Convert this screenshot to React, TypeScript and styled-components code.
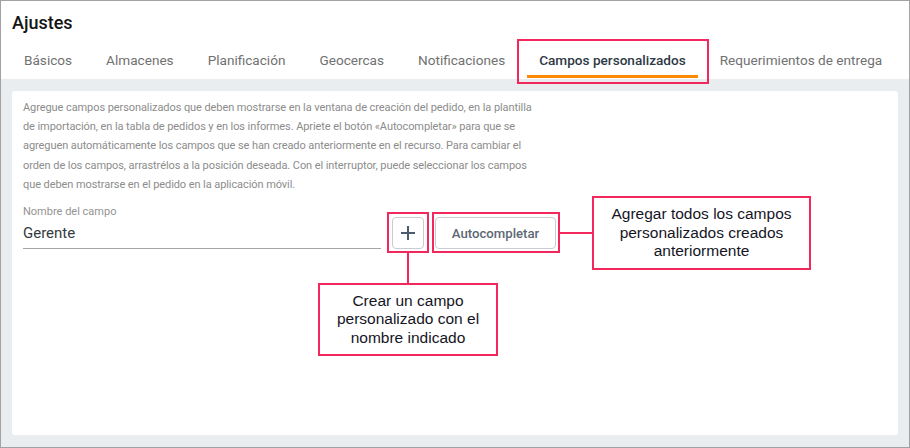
import React from 'react';
import styled, { createGlobalStyle } from 'styled-components';

const GlobalStyle = createGlobalStyle`
  html, body {
    margin: 0;
    padding: 0;
    background: #ffffff;
  }
  * {
    box-sizing: border-box;
  }
`;

const Root = styled.div`
  position: relative;
  width: 910px;
  height: 448px;
  border: 1px solid #a2a2a2;
  font-family: Roboto, 'Liberation Sans', sans-serif;
  display: flex;
  flex-direction: column;
  overflow: hidden;
`;

const Header = styled.div`
  background: #ffffff;
  padding: 10px 0 0 11px;
`;

const Title = styled.h1`
  margin: 0;
  font-size: 18px;
  line-height: 24px;
  font-weight: 500;
  color: #141414;
`;

const TabBar = styled.div`
  display: flex;
  gap: 10px;
  margin-top: 7px;
`;

const Tab = styled.div<{ $active?: boolean }>`
  height: 36px;
  padding: 3px 12px 0;
  display: flex;
  align-items: center;
  font-size: 13.6px;
  white-space: nowrap;
  color: ${(p) => (p.$active ? '#2e3945' : '#717171')};
  font-weight: ${(p) => (p.$active ? 500 : 400)};
  border-bottom: 3px solid ${(p) => (p.$active ? '#ff8a00' : 'transparent')};
  margin-bottom: 1px;
`;

const Body = styled.div`
  flex: 1;
  background: #e9edf0;
  padding: 12px 11px 12px 11px;
  display: flex;
`;

const Card = styled.div`
  flex: 1;
  background: #ffffff;
  border-radius: 3px;
  padding: 7px 11px;
`;

const Description = styled.p`
  margin: 0;
  width: 520px;
  font-size: 11px;
  letter-spacing: -0.08px;
  line-height: 19.2px;
  color: #8c8c8c;
`;

const FormRow = styled.div`
  display: flex;
  align-items: flex-end;
  gap: 11px;
  margin-top: 11px;
`;

const Field = styled.div`
  width: 358px;
  display: flex;
  flex-direction: column;
`;

const Label = styled.div`
  font-size: 11px;
  line-height: 13px;
  color: #939393;
`;

const Input = styled.div`
  height: 31px;
  display: flex;
  align-items: center;
  font-size: 15px;
  color: #333a40;
  border-bottom: 1px solid #a5a5a5;
`;

const Button = styled.button<{ $square?: boolean }>`
  height: 32px;
  width: ${(p) => (p.$square ? '32px' : '121px')};
  padding: 0;
  display: flex;
  align-items: center;
  justify-content: center;
  background: #ffffff;
  border: 1px solid #c9cdd1;
  border-radius: 4px;
  font-family: Roboto, 'Liberation Sans', sans-serif;
  font-size: 13.2px;
  font-weight: 500;
  color: #5d6873;
`;

const Highlight = styled.div`
  position: absolute;
  border: 2px solid #f2275b;
  pointer-events: none;
`;

const Connector = styled.div`
  position: absolute;
  background: #f2275b;
`;

const Callout = styled.div`
  position: absolute;
  border: 2px solid #f2275b;
  background: #ffffff;
  display: flex;
  align-items: center;
  justify-content: center;
  text-align: center;
  font-family: 'Liberation Sans', Arial, sans-serif;
  font-size: 15.5px;
  line-height: 18.5px;
  color: #15151f;
`;

const tabs = [
  'Básicos',
  'Almacenes',
  'Planificación',
  'Geocercas',
  'Notificaciones',
  'Campos personalizados',
  'Requerimientos de entrega',
];

const PlusIcon = () => (
  <svg width="16" height="16" viewBox="0 0 16 16">
    <path d="M8 1v14M1 8h14" stroke="#4b5c6d" strokeWidth="2" fill="none" />
  </svg>
);

export default function App() {
  return (
    <Root>
      <GlobalStyle />
      <Header>
        <Title>Ajustes</Title>
        <TabBar>
          {tabs.map((t) => (
            <Tab key={t} $active={t === 'Campos personalizados'}>
              {t}
            </Tab>
          ))}
        </TabBar>
      </Header>
      <Body>
        <Card>
          <Description>
            Agregue campos personalizados que deben mostrarse en la ventana de creación del pedido, en la plantilla
            de importación, en la tabla de pedidos y en los informes. Apriete el botón «Autocompletar» para que se
            agreguen automáticamente los campos que se han creado anteriormente en el recurso. Para cambiar el
            orden de los campos, arrastrélos a la posición deseada. Con el interruptor, puede seleccionar los campos
            que deben mostrarse en el pedido en la aplicación móvil.
          </Description>
          <FormRow>
            <Field>
              <Label>Nombre del campo</Label>
              <Input>Gerente</Input>
            </Field>
            <Button $square>
              <PlusIcon />
            </Button>
            <Button>Autocompletar</Button>
          </FormRow>
        </Card>
      </Body>

      <Highlight style={{ left: 516, top: 38, width: 192, height: 45 }} />
      <Highlight style={{ left: 386, top: 211, width: 42, height: 41 }} />
      <Highlight style={{ left: 431, top: 211, width: 128, height: 41 }} />
      <Connector style={{ left: 558, top: 231, width: 33, height: 2 }} />
      <Connector style={{ left: 406, top: 251, width: 2, height: 32 }} />
      <Callout style={{ left: 591, top: 195, width: 219, height: 74 }}>
        Agregar todos los campos
        <br />
        personalizados creados
        <br />
        anteriormente
      </Callout>
      <Callout style={{ left: 317, top: 282, width: 180, height: 73 }}>
        Crear un campo
        <br />
        personalizado con el
        <br />
        nombre indicado
      </Callout>
    </Root>
  );
}
